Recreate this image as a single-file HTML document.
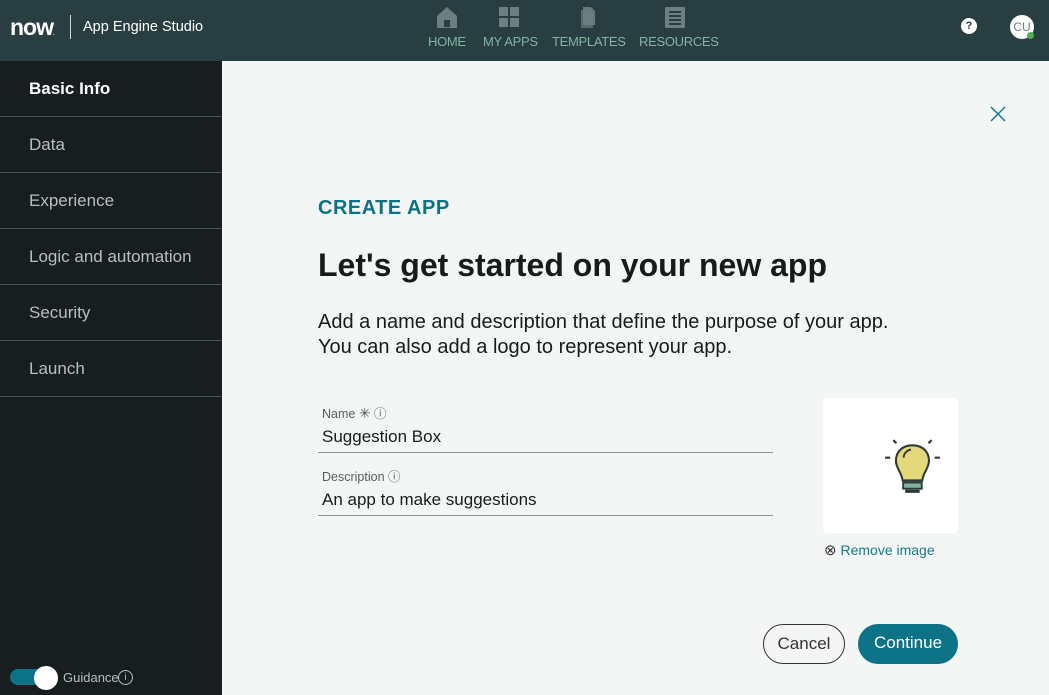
<!DOCTYPE html>
<html><head><meta charset="utf-8"><style>
*{box-sizing:border-box;margin:0;padding:0}
body{width:1049px;height:695px;overflow:hidden;font-family:"Liberation Sans",sans-serif;background:#f4f5f5;position:relative}
.hdr{position:absolute;left:0;top:0;width:1049px;height:61px;background:#293e40}
.logo{position:absolute;left:10px;top:14px;color:#fff;font-weight:bold;font-size:23px;letter-spacing:-1px}
.sep{position:absolute;left:70px;top:15px;width:1px;height:24px;background:#cfd6d6}
.app{position:absolute;left:83px;top:19px;color:#fff;font-size:14.5px}
.nav{position:absolute;top:34px;color:#81b5a1;font-size:13px;letter-spacing:-0.3px}
.ic{position:absolute;top:7px;fill:#6e7f80}
.side{position:absolute;left:0;top:61px;width:222px;height:634px;background:#181e1f}
.item{height:56px;border-bottom:1px solid #4a5556;color:#b8bfbf;font-size:17px;padding-left:29px;line-height:56px}
.item.b{color:#fff;font-weight:bold}
.main{position:absolute;left:222px;top:61px;width:827px;height:634px}
.ca{position:absolute;left:96px;top:136px;color:#0c7285;font-weight:bold;font-size:20px;letter-spacing:.5px}
.h1{position:absolute;left:96px;top:186px;font-weight:bold;font-size:32px;color:#161b1c}
.p{position:absolute;left:96px;top:249px;font-size:20px;line-height:25px;color:#161b1c}
.lbl{position:absolute;left:100px;font-size:12.5px;color:#545f60}
.val{position:absolute;left:100px;font-size:17px;color:#161b1c}
.line{position:absolute;left:96px;width:455px;height:1px;background:#8b9596}
.card{position:absolute;left:601px;top:337px;width:135px;height:135px;background:#fff;border-radius:4px}
.rm{position:absolute;left:602px;top:480px;color:#137b8c;font-size:14px}
.btn{position:absolute;top:563px;height:40px;border-radius:20px;font-size:17px;text-align:center;line-height:38px}
</style></head><body>
<div class="hdr">
<div class="logo">now<span style="font-size:6px">.</span></div>
<div class="sep"></div>
<div class="app">App Engine Studio</div>
<svg class="ic" style="left:437px" width="20" height="21" viewBox="0 0 20 21"><path d="M10 0L20 9V21H0V9Z"/><rect x="7" y="13" width="6" height="7" fill="#293e40"/></svg>
<svg class="ic" style="left:499px" width="20" height="20"><rect width="9" height="9"/><rect x="11" width="9" height="9"/><rect y="11" width="9" height="9"/><rect x="11" y="11" width="9" height="9"/></svg>
<svg class="ic" style="left:578px" width="18" height="21"><path d="M3 3H11L15 7V21H3Z" opacity=".7"/><path d="M0 0H8L12 4V18H0Z" transform="translate(5,0)" opacity=".9"/></svg>
<svg class="ic" style="left:665px" width="20" height="21"><rect width="20" height="21" rx="1"/><rect x="4" y="4" width="12" height="2" fill="#293e40"/><rect x="4" y="8" width="12" height="2" fill="#293e40"/><rect x="4" y="12" width="12" height="2" fill="#293e40"/><rect x="4" y="16" width="12" height="2" fill="#293e40"/></svg>
<div class="nav" style="left:428px">HOME</div>
<div class="nav" style="left:483px">MY APPS</div>
<div class="nav" style="left:552px">TEMPLATES</div>
<div class="nav" style="left:639px">RESOURCES</div>
<div style="position:absolute;left:961px;top:18px;width:16px;height:16px;border-radius:50%;background:#fff;color:#293e40;font-size:11px;font-weight:bold;text-align:center;line-height:16px">?</div>
<div style="position:absolute;left:1010px;top:15px;width:24px;height:24px;border-radius:50%;background:#fff;color:#6e7f80;font-size:12px;text-align:center;line-height:24px">CU</div>
<div style="position:absolute;left:1027px;top:32px;width:7px;height:7px;border-radius:50%;background:#4caf50"></div>
</div>
<div class="side">
<div class="item b">Basic Info</div><div class="item">Data</div><div class="item">Experience</div><div class="item">Logic and automation</div><div class="item">Security</div><div class="item">Launch</div>
<div style="position:absolute;left:10px;top:608px;width:46px;height:16px;border-radius:8px;background:#0c7285"></div>
<div style="position:absolute;left:34px;top:605px;width:24px;height:24px;border-radius:50%;background:#fff"></div>
<div style="position:absolute;left:63px;top:609px;color:#b8bfbf;font-size:13px">Guidance</div>
<div style="position:absolute;left:118px;top:609px;width:15px;height:15px;border:1.2px solid #b8bfbf;border-radius:50%;color:#b8bfbf;font-size:10px;text-align:center;line-height:13px">i</div>
</div>
<div class="main">
<svg style="position:absolute;left:768px;top:45px" width="16" height="16"><path d="M1 1L15 15M15 1L1 15" stroke="#137b8c" stroke-width="1.5"/></svg>
<div class="ca">CREATE APP</div>
<div class="h1">Let's get started on your new app</div>
<div class="p">Add a name and description that define the purpose of your app.<br>You can also add a logo to represent your app.</div>
<div class="lbl" style="top:342px">Name <span style="font-size:14px">✳</span> ⓘ</div>
<div class="val" style="top:366px">Suggestion Box</div>
<div class="line" style="top:391px"></div>
<div class="lbl" style="top:405px">Description ⓘ</div>
<div class="val" style="top:429px">An app to make suggestions</div>
<div class="line" style="top:454px"></div>
<div class="card"><svg style="position:absolute;left:60px;top:38px" width="62" height="62" viewBox="0 0 60 60">
<path d="M10 4L13 7M47 4L44 7M2 21H7M50 21H55" stroke="#333" stroke-width="2"/>
<path d="M28.5 9C19 9 12.5 15 12.5 24C12.5 31 18 35 19 43H38C39 35 44.5 31 44.5 24C44.5 15 38 9 28.5 9Z" fill="#e4d97a" stroke="#2c3a3c" stroke-width="2"/>
<path d="M20 21C20 17 23 14 27 13" stroke="#2c3a3c" stroke-width="1.8" fill="none"/>
<rect x="19.5" y="45" width="18" height="6" fill="#7fb39d" stroke="#2c3a3c" stroke-width="1.8"/>
<rect x="21.5" y="52" width="14" height="3" fill="#2c3a3c"/></svg></div>
<div class="rm"><span style="color:#333;font-size:15px">⊗</span> Remove image</div>
<div class="btn" style="left:541px;width:82px;border:1.2px solid #333;color:#333">Cancel</div>
<div class="btn" style="left:636px;width:100px;background:#0c7285;color:#fff">Continue</div>
</div>
</body></html>
